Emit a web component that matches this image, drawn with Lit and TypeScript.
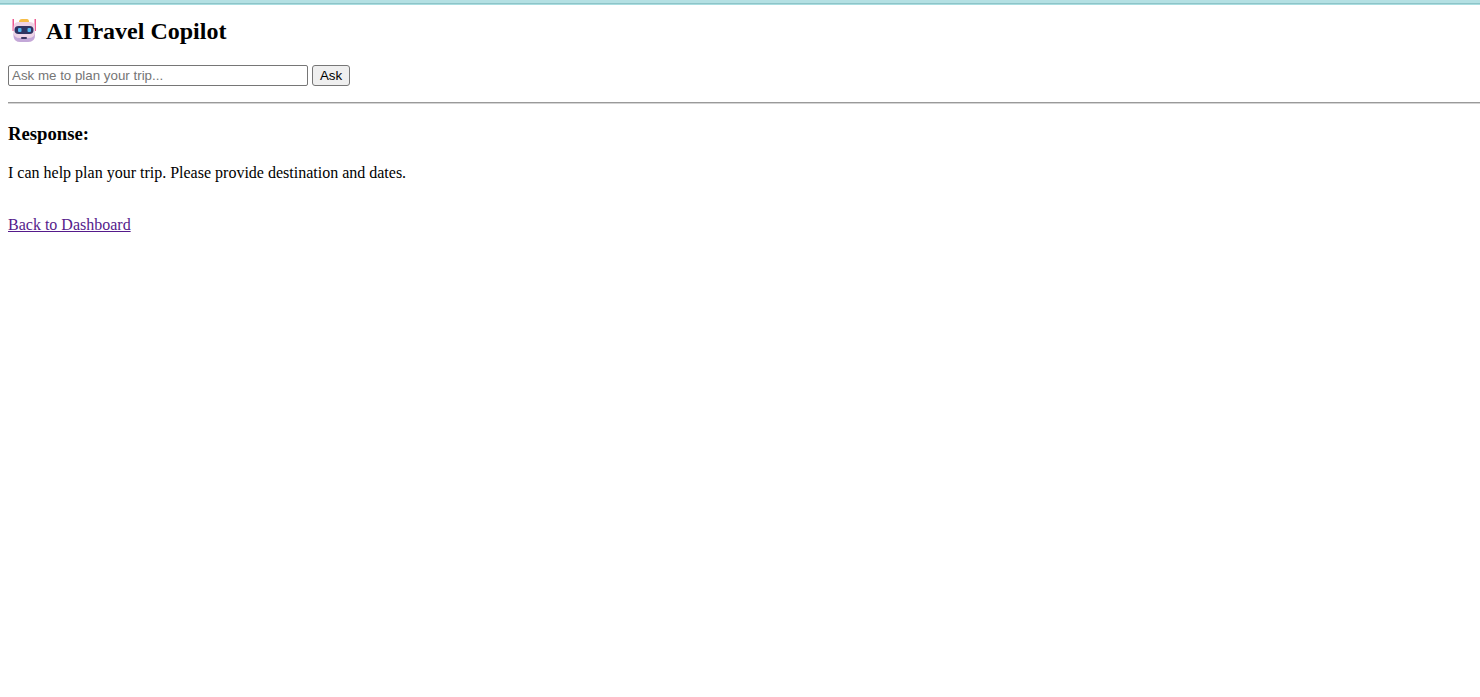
import { LitElement, html, css } from 'lit';
import { customElement } from 'lit/decorators.js';

@customElement('app-root')
export class AppRoot extends LitElement {
  static styles = css`
    :host {
      display: block;
      font-family: 'Liberation Serif', 'Times New Roman', serif;
      font-size: 16px;
      color: #000;
      background: #fff;
      min-height: 697px;
    }
    .strip {
      height: 5px;
      background: linear-gradient(#b4e0e3 0 3px, #8ec4c8 3px 4px, #a9dde0 4px);
    }
    .page {
      padding: 0 0 0 8px;
    }
    h2 {
      display: flex;
      align-items: center;
      gap: 9px;
      margin: 12px 0 0;
      font-size: 24px;
      line-height: 28px;
      font-weight: bold;
    }
    h2 svg {
      display: block;
      margin: -2px 0 0 4px;
    }
    form {
      display: flex;
      align-items: flex-start;
      gap: 4px;
      margin-top: 20px;
    }
    input {
      box-sizing: border-box;
      width: 300px;
      height: 21px;
      margin: 0;
      padding: 1px 3px;
      border: 1px solid #767676;
      border-radius: 2px;
      font: 13.3333px 'Liberation Sans', Arial, sans-serif;
      background: #fff;
    }
    input::placeholder {
      color: #757575;
      opacity: 1;
    }
    button {
      box-sizing: border-box;
      height: 21px;
      width: 38px;
      margin: 0;
      padding: 1px 6px;
      border: 1px solid #767676;
      border-radius: 3px;
      background: #efefef;
      color: #000;
      font: 13.3333px 'Liberation Sans', Arial, sans-serif;
    }
    hr {
      margin: 16px 0 0;
      height: 0;
      border: 0;
      border-top: 1px solid #9a9a9a;
      border-bottom: 1px solid #d4d4d4;
    }
    h3 {
      margin: 19px 0 0;
      font-size: 18.72px;
      line-height: 21px;
      font-weight: bold;
    }
    p {
      margin: 20px 0 0;
      line-height: 18px;
    }
    .back {
      display: block;
      margin-top: 34px;
      line-height: 18px;
    }
    a {
      color: #551a8b;
      text-decoration: underline;
    }
  `;

  render() {
    return html`
      <div class="strip"></div>
      <div class="page">
        <h2>
          <svg width="25" height="25" viewBox="0 0 25 25" aria-hidden="true">
            <rect x="0.5" y="1" width="1.5" height="12" fill="#ee5a92"></rect>
            <rect x="22.5" y="1" width="1.5" height="12" fill="#ee5a92"></rect>
            <path d="M7 4 Q7 1 10 1 H15 Q17 1 17 4 Z" fill="#f6bd48"></path>
            <path d="M6 4 H18 Q23 4 23 10 V17 Q23 24 16 24 H8 Q1.500 24 1.500 17 V10 Q1.500 4 6 4 Z" fill="#eed3e6"></path>
            <path d="M8 20 Q1.500 20 1.500 14 V17 Q1.500 24 8 24 H16 Q23 24 23 17 V14 Q23 20 16 20 Z" fill="#c3a8d8"></path>
            <rect x="2.500" y="8" width="19" height="8" rx="4" fill="#2f3462"></rect>
            <rect x="6" y="10" width="3.500" height="4" rx="1" fill="#4fb4ee"></rect>
            <rect x="15.500" y="10" width="3.500" height="4" rx="1" fill="#4fb4ee"></rect>
            <rect x="9" y="19" width="6" height="2" rx="1" fill="#3b3560"></rect>
          </svg>
          AI Travel Copilot
        </h2>
        <form @submit=${(e: Event) => e.preventDefault()}>
          <input type="text" placeholder="Ask me to plan your trip..." />
          <button type="submit">Ask</button>
        </form>
        <hr />
        <h3>Response:</h3>
        <p>I can help plan your trip. Please provide destination and dates.</p>
        <a class="back" href="#">Back to Dashboard</a>
      </div>
    `;
  }
}
